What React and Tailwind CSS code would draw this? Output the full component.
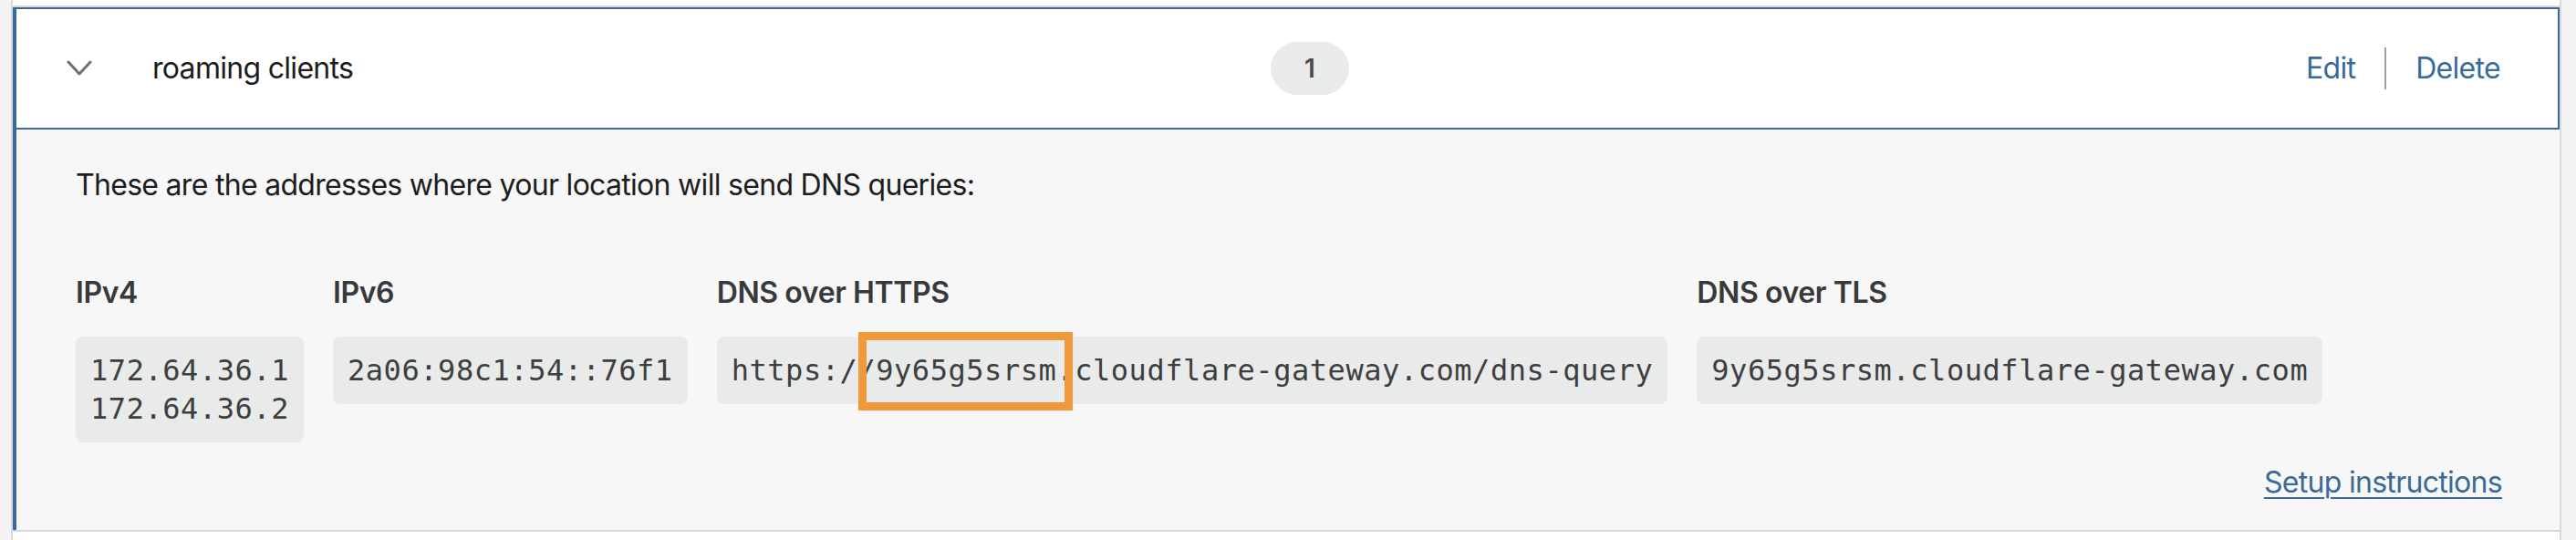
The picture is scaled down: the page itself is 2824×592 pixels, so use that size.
function Chevron() {
  return (
    <svg width="28" height="18" viewBox="0 0 28 18" fill="none" className="block">
      <polyline points="2,2 14,15 26,2" stroke="#6e7175" strokeWidth="3" strokeLinecap="round" strokeLinejoin="round" />
    </svg>
  );
}

function CodeBox({ children }) {
  return (
    <div className="rounded-[8px] bg-[#e9eaea] p-[16px] text-[32px] leading-[42px] tracking-[0.55px] text-[#3d3e40] whitespace-pre [font-family:'DejaVu_Sans_Mono',monospace]">
      {children}
    </div>
  );
}

function Column({ title, children }) {
  return (
    <div className="flex flex-col items-start">
      <h3 className="mb-[24px] text-[32px] font-semibold leading-[48px] tracking-[-0.4px] text-[#38393b]">{title}</h3>
      {children}
    </div>
  );
}

export default function App() {
  return (
    <div className="h-screen bg-[#f3f3f3] pl-[12px] pr-[16px] [font-family:Inter,sans-serif] tracking-[-0.7px]">
      <div className="flex h-full flex-col border-x-2 border-[#d9d9d9] bg-white">
        <div className="h-[6px]" />
        <div className="border-t-2 border-[#d9d9d9]">
          <div className="border-l-4 border-[#3a6a98]">
            {/* header row */}
            <div className="flex h-[134px] items-center border-y-2 border-r-2 border-[#3a6a98] bg-white pl-[55px] pr-[63px]">
              <Chevron />
              <div className="ml-[66px] w-[1226px] shrink-0 text-[32px] text-[#1c1c1c]">roaming clients</div>
              <div className="flex h-[58px] w-[86px] items-center justify-center rounded-full bg-[#e9eaea] text-[28px] font-semibold tracking-normal text-[#4a4b4d]">
                1
              </div>
              <div className="flex-1" />
              <div className="flex items-center text-[32px] text-[#3a6a98]">
                <a href="#">Edit</a>
                <span className="mx-[32px] h-[46px] w-[2px] bg-[#9d9d9d]" />
                <a href="#">Delete</a>
              </div>
            </div>

            {/* expanded body */}
            <div className="bg-[#f7f7f7] pl-[65px] pr-[63px] pt-[37px] pb-[28px]">
              <p className="text-[32px] leading-[48px] text-[#1d1d1d]">
                These are the addresses where your location will send DNS queries:
              </p>

              <div className="mt-[70px] flex items-start gap-[32px]">
                <Column title="IPv4">
                  <CodeBox>
                    172.64.36.1
                    <br />
                    172.64.36.2
                  </CodeBox>
                </Column>
                <Column title="IPv6">
                  <CodeBox>2a06:98c1:54::76f1</CodeBox>
                </Column>
                <Column title="DNS over HTTPS">
                  <CodeBox>
                    https://
                    <span className="relative">
                      9y65g5srsm
                      <span className="absolute -left-[19px] -right-[18px] -top-[23px] -bottom-[25px] border-[9px] border-[#f0993b]" />
                    </span>
                    .cloudflare-gateway.com/dns-query
                  </CodeBox>
                </Column>
                <Column title="DNS over TLS">
                  <CodeBox>9y65g5srsm.cloudflare-gateway.com</CodeBox>
                </Column>
              </div>

              <div className="mt-[20px] flex justify-end">
                <a href="#" className="text-[32px] leading-[48px] text-[#3a6a98] underline underline-offset-[5px] decoration-[2px]">
                  Setup instructions
                </a>
              </div>
            </div>
          </div>
        </div>
        <div className="flex-1 border-t-2 border-[#d9d9d9] bg-white" />
      </div>
    </div>
  );
}
